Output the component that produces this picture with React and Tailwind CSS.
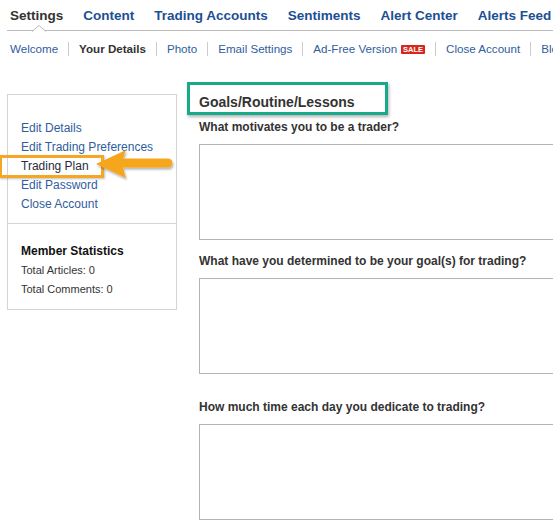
import React from 'react';

const topNav = ['Settings', 'Content', 'Trading Accounts', 'Sentiments', 'Alert Center', 'Alerts Feed'];
const subNav = ['Welcome', 'Your Details', 'Photo', 'Email Settings', 'Ad-Free Version', 'Close Account', 'Blog'];
const sideLinks = ['Edit Details', 'Edit Trading Preferences', 'Trading Plan', 'Edit Password', 'Close Account'];
const questions = [
  { label: 'What motivates you to be a trader?', mt: 'mt-[10px]' },
  { label: 'What have you determined to be your goal(s) for trading?', mt: 'mt-[14px]' },
  { label: 'How much time each day you dedicate to trading?', mt: 'mt-[26px]' },
];

const App = () => {
  return (
    <div className="relative w-[553px] h-[526px] overflow-hidden bg-white text-[#333] font-['Liberation_Sans',Arial,sans-serif]">
      {/* top tabs */}
      <div className="relative ml-[7px] pl-[3px] pt-[8px] h-[31px] flex items-start gap-[20px] border-b border-[#bbb] whitespace-nowrap">
        {topNav.map((item, i) => (
          <span
            key={item}
            className={`text-[13.5px] leading-[16px] font-bold ${i === 0 ? 'text-[#333]' : 'text-[#1c4f94]'}`}
          >
            {item}
          </span>
        ))}
        <svg className="absolute left-[25px] top-[25px]" width="14" height="7" viewBox="0 0 14 7">
          <polygon points="0,7 7,0.5 14,7" fill="white" />
          <polyline points="0,6.5 7,0.5 14,6.5" fill="none" stroke="#bbb" strokeWidth="1" />
        </svg>
      </div>

      {/* sub tabs */}
      <div className="flex items-center pt-[11px] whitespace-nowrap">
        {subNav.map((item, i) => (
          <span
            key={item}
            className={`flex items-center px-[10px] text-[11.6px] leading-[14px] ${i > 0 ? 'border-l border-[#ccc]' : ''} ${i === 1 ? 'font-bold text-[#333]' : 'text-[#2f5d9e]'}`}
          >
            {item}
            {item === 'Ad-Free Version' && (
              <span className="ml-[4px] w-[24px] text-center bg-[#d8261c] text-white text-[7.5px] font-bold leading-[9px] rounded-[1px]">
                SALE
              </span>
            )}
          </span>
        ))}
      </div>

      {/* main */}
      <div className="flex pl-[7px] mt-[7px] gap-[22px]">
        <div className="w-[170px] shrink-0 mt-[31px] h-[216px] border border-[#d4d4d4] self-start">
          <div className="pl-[13px] pt-[24px] pb-[9px] border-b border-[#d4d4d4]">
            {sideLinks.map((link) => (
              <div
                key={link}
                className={`text-[12px] leading-[19px] ${link === 'Trading Plan' ? 'text-[#2b2b3a]' : 'text-[#2f5d9e]'}`}
              >
                {link}
              </div>
            ))}
          </div>
          <div className="pl-[13px] pt-[18px]">
            <div className="text-[12px] leading-[19px] font-bold text-[#111]">Member Statistics</div>
            <div className="text-[11px] leading-[19px] text-[#333]">Total Articles: 0</div>
            <div className="text-[11px] leading-[19px] text-[#333]">Total Comments: 0</div>
          </div>
        </div>

        <div className="pt-[31px] shrink-0">
          <div className="relative">
            <h2 className="text-[14px] leading-[16px] font-bold text-[#333] whitespace-nowrap">Goals/Routine/Lessons</h2>
            <div className="absolute left-[-12px] top-[-12px] w-[201px] h-[33px] border-[3px] border-[#16a98a] shadow-[1px_2px_3px_rgba(0,0,0,0.3)]" />
          </div>
          {questions.map((q) => (
            <div key={q.label} className={q.mt}>
              <div className="text-[12px] leading-[14px] font-bold text-[#333] whitespace-nowrap">{q.label}</div>
              <textarea className="mt-[10px] block w-[420px] h-[96px] border border-[#b4b4b4] resize-none outline-none" />
            </div>
          ))}
        </div>
      </div>

      {/* annotation: highlight + arrow */}
      <div className="absolute left-[-1px] top-[155px] w-[105px] h-[23px] border-[3px] border-[#f5a623] shadow-[1px_1px_2px_rgba(0,0,0,0.25)]" />
      <svg className="absolute left-0 top-0 pointer-events-none" width="553" height="526" viewBox="0 0 553 526">
        <defs>
          <filter id="arrowShadow" x="-10%" y="-30%" width="130%" height="180%">
            <feDropShadow dx="1" dy="2" stdDeviation="1.2" floodColor="#000" floodOpacity="0.3" />
          </filter>
        </defs>
        <path
          d="M96 164 L126 150 L123 158.5 L168 158.5 A4.5 4.5 0 0 1 168 167.5 L123 167.5 L126 178 Z"
          fill="#f5a61c"
          filter="url(#arrowShadow)"
        />
      </svg>
    </div>
  );
};

export default App;
